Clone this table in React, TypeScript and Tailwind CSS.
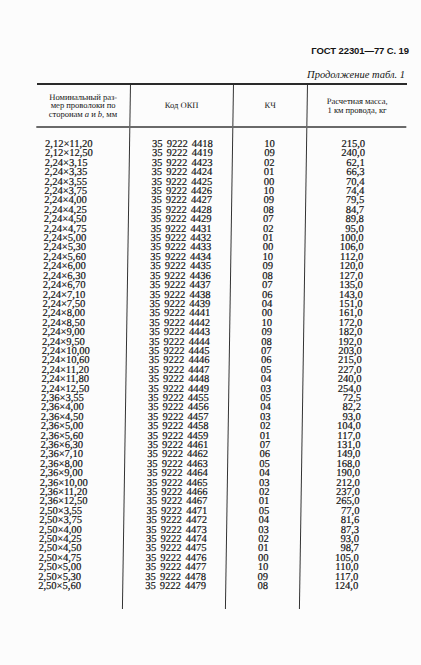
import React from 'react';

const ROWS: [string, string, string, string][] = [
  ['2,12×11,20', '4418', '10', '215,0'],
  ['2,12×12,50', '4419', '09', '240,0'],
  ['2,24×3,15', '4423', '02', '62,1'],
  ['2,24×3,35', '4424', '01', '66,3'],
  ['2,24×3,55', '4425', '00', '70,4'],
  ['2,24×3,75', '4426', '10', '74,4'],
  ['2,24×4,00', '4427', '09', '79,5'],
  ['2,24×4,25', '4428', '08', '84,7'],
  ['2,24×4,50', '4429', '07', '89,8'],
  ['2,24×4,75', '4431', '02', '95,0'],
  ['2,24×5,00', '4432', '01', '100,0'],
  ['2,24×5,30', '4433', '00', '106,0'],
  ['2,24×5,60', '4434', '10', '112,0'],
  ['2,24×6,00', '4435', '09', '120,0'],
  ['2,24×6,30', '4436', '08', '127,0'],
  ['2,24×6,70', '4437', '07', '135,0'],
  ['2,24×7,10', '4438', '06', '143,0'],
  ['2,24×7,50', '4439', '04', '151,0'],
  ['2,24×8,00', '4441', '00', '161,0'],
  ['2,24×8,50', '4442', '10', '172,0'],
  ['2,24×9,00', '4443', '09', '182,0'],
  ['2,24×9,50', '4444', '08', '192,0'],
  ['2,24×10,00', '4445', '07', '203,0'],
  ['2,24×10,60', '4446', '06', '215,0'],
  ['2,24×11,20', '4447', '05', '227,0'],
  ['2,24×11,80', '4448', '04', '240,0'],
  ['2,24×12,50', '4449', '03', '254,0'],
  ['2,36×3,55', '4455', '05', '72,5'],
  ['2,36×4,00', '4456', '04', '82,2'],
  ['2,36×4,50', '4457', '03', '93,0'],
  ['2,36×5,00', '4458', '02', '104,0'],
  ['2,36×5,60', '4459', '01', '117,0'],
  ['2,36×6,30', '4461', '07', '131,0'],
  ['2,36×7,10', '4462', '06', '149,0'],
  ['2,36×8,00', '4463', '05', '168,0'],
  ['2,36×9,00', '4464', '04', '190,0'],
  ['2,36×10,00', '4465', '03', '212,0'],
  ['2,36×11,20', '4466', '02', '237,0'],
  ['2,36×12,50', '4467', '01', '265,0'],
  ['2,50×3,55', '4471', '05', '77,0'],
  ['2,50×3,75', '4472', '04', '81,6'],
  ['2,50×4,00', '4473', '03', '87,3'],
  ['2,50×4,25', '4474', '02', '93,0'],
  ['2,50×4,50', '4475', '01', '98,7'],
  ['2,50×4,75', '4476', '00', '105,0'],
  ['2,50×5,00', '4477', '10', '110,0'],
  ['2,50×5,30', '4478', '09', '117,0'],
  ['2,50×5,60', '4479', '08', '124,0'],
];

export default function App() {
  return (
    <div className="w-[421px] h-[665px] overflow-hidden bg-[#fcfcfc] text-[#141414] font-['Liberation_Serif',serif]">
      {/* page header */}
      <div className="pt-[45px] pr-[12px] flex justify-end">
        <span className="font-['Liberation_Sans',sans-serif] font-bold text-[9.5px] leading-[12px] tracking-[-0.1px]">
          ГОСТ 22301—77 С. 19
        </span>
      </div>
      <div className="mt-[11px] pr-[16px] flex justify-end">
        <span className="italic text-[10.5px] leading-[13px]">Продолжение табл. 1</span>
      </div>

      {/* table, sheared slightly like the scanned page */}
      <div className="mt-[2px] ml-[37px] w-[370px] origin-top [transform:skewX(-0.88deg)]">
        <div className="h-[2px] bg-[#2a2a2a]" />
        <div className="grid grid-cols-[93px_103px_74px_100px] h-[41px] text-[8.5px] leading-[8.5px]">
          <div className="flex items-center justify-center text-center">
            <span>
              Номинальный раз-
              <br />
              мер проволоки по
              <br />
              сторонам <i>a</i> и <i>b</i>, мм
            </span>
          </div>
          <div className="border-l border-[#333] flex items-center justify-center">Код ОКП</div>
          <div className="border-l border-[#333] flex items-center justify-center">КЧ</div>
          <div className="border-l border-[#333] flex items-center justify-center text-center">
            <span>
              Расчетная масса,
              <br />1 км провода, кг
            </span>
          </div>
        </div>
        <div className="h-[2px] bg-[#6a6a6a]" />
        <div className="grid grid-cols-[93px_103px_74px_100px] text-[10.5px] leading-[9.4px] [-webkit-text-stroke:0.2px_#141414]">
          <div className="pt-[11px] pb-[18px] pl-[9px]">
            {ROWS.map((r) => (
              <div key={r[1]}>{r[0]}</div>
            ))}
          </div>
          <div className="border-l border-[#333] pt-[11px] pl-[22px] [word-spacing:1.5px]">
            {ROWS.map((r) => (
              <div key={r[1]}>35 9222 {r[1]}</div>
            ))}
          </div>
          <div className="border-l border-[#333] pt-[11px] text-center">
            {ROWS.map((r) => (
              <div key={r[1]}>{r[2]}</div>
            ))}
          </div>
          <div className="border-l border-[#333] pt-[11px] pr-[41px] text-right">
            {ROWS.map((r) => (
              <div key={r[1]}>{r[3]}</div>
            ))}
          </div>
        </div>
      </div>
    </div>
  );
}
